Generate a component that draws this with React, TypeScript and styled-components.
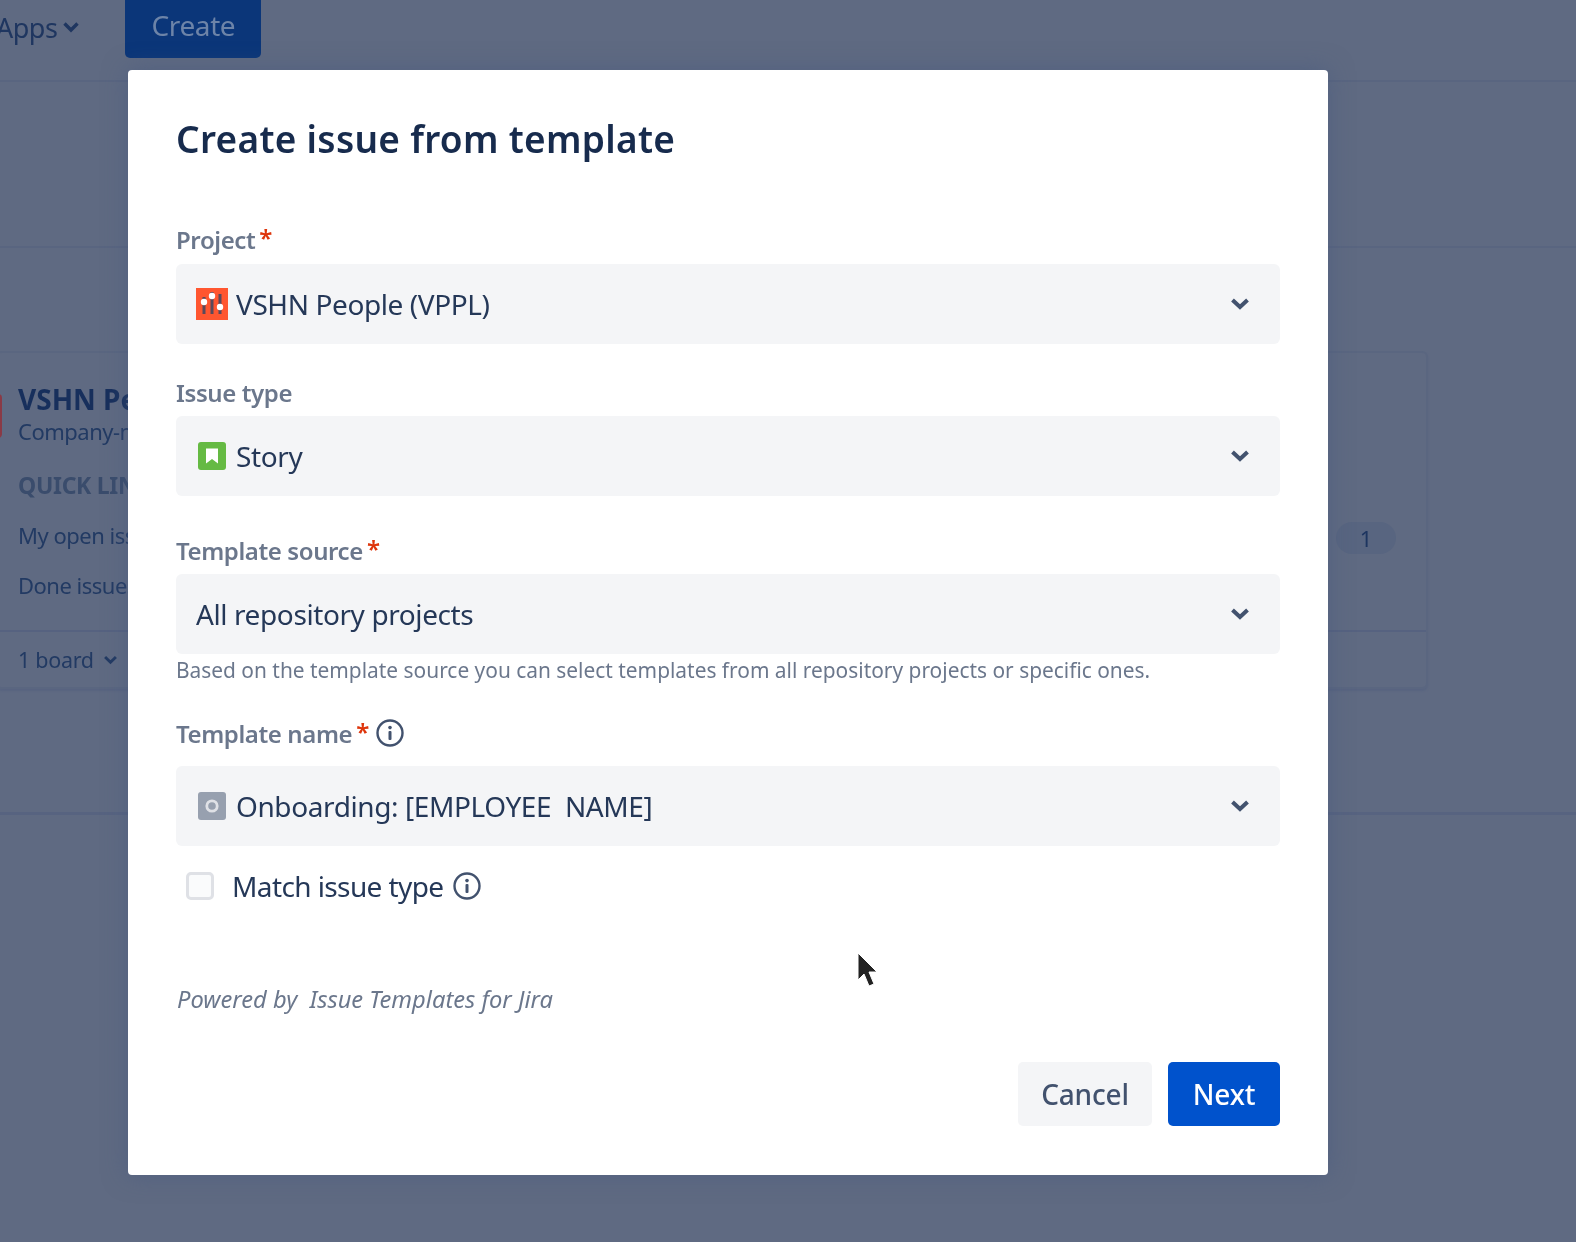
import React from "react";
import styled, { createGlobalStyle } from "styled-components";

const Global = createGlobalStyle`
  html, body { margin: 0; padding: 0; background: #5f6a82; }
  body { width: 1576px; height: 1242px; overflow: hidden; font-family: "Noto Sans", "Open Sans", sans-serif; }
  * { box-sizing: border-box; }
`;

const Page = styled.div`
  position: relative;
  width: 1576px;
  height: 1242px;
  overflow: hidden;
  background: #5f6a82;
  filter: blur(0.45px);
`;

/* dimmed page behind the dialog */
const Nav = styled.header`
  height: 82px;
  margin-left: -4px;
  display: flex;
  align-items: flex-start;
  gap: 45px;
  border-bottom: 2px solid #596580;
`;
const NavItem = styled.div`
  height: 54px;
  display: flex;
  align-items: center;
  gap: 5px;
  font-size: 27px;
  letter-spacing: -0.5px;
  color: #1f3660;
`;
const CreateButton = styled.div`
  width: 136px;
  height: 58px;
  padding-bottom: 8px;
  display: flex;
  align-items: center;
  justify-content: center;
  background: #0b3679;
  border-radius: 0 0 5px 5px;
  font-size: 28px;
  letter-spacing: -0.4px;
  color: #6d84a8;
`;
const PageHeader = styled.div`
  height: 166px;
  border-bottom: 2px solid #596580;
`;
const Content = styled.div`
  height: 567px;
  padding: 103px 148px 0 0;
  border-bottom: 3px solid #576380;
`;
const Card = styled.section`
  height: 338px;
  margin-left: -4px;
  border: 2px solid #5a6680;
  border-radius: 6px;
  box-shadow: 0 2px 2px #586480;
  display: flex;
  flex-direction: column;
`;
const CardBody = styled.div`
  position: relative;
  flex: 1;
  padding: 28px 0 0 20px;
  border-bottom: 2px solid #566280;
`;
const CardIcon = styled.div`
  position: absolute;
  left: -26px;
  top: 41px;
  width: 30px;
  height: 44px;
  background: #8a3a46;
  border-radius: 4px;
`;
const CardTitle = styled.div`
  font-size: 28px;
  font-weight: 700;
  line-height: 36px;
  color: #172f5c;
  white-space: nowrap;
`;
const CardSub = styled.div`
  font-size: 22px;
  line-height: 28px;
  letter-spacing: -0.5px;
  color: #223a63;
  white-space: nowrap;
`;
const CardHeading = styled.div`
  margin-top: 26px;
  font-size: 23px;
  font-weight: 700;
  line-height: 28px;
  letter-spacing: -0.3px;
  color: #3a4c6c;
  white-space: nowrap;
`;
const QuickLink = styled.div<{ $mt: number }>`
  margin-top: ${(p) => p.$mt}px;
  font-size: 22px;
  line-height: 28px;
  letter-spacing: -0.5px;
  color: #223a63;
  white-space: nowrap;
`;
const Badge = styled.div`
  position: absolute;
  right: 30px;
  top: 169px;
  width: 60px;
  height: 32px;
  border-radius: 16px;
  background: #586580;
  display: flex;
  align-items: center;
  justify-content: center;
  font-size: 22px;
  color: #1d3560;
`;
const CardFooter = styled.div`
  height: 55px;
  padding-left: 20px;
  display: flex;
  align-items: center;
  gap: 9px;
  font-size: 21.5px;
  letter-spacing: -0.3px;
  color: #223a63;
`;

/* dialog */
const Dialog = styled.div`
  position: absolute;
  left: 128px;
  top: 70px;
  width: 1200px;
  height: 1105px;
  padding: 49px 48px 49px;
  background: #fff;
  border-radius: 4px;
  box-shadow: 0 0 24px rgba(70, 88, 125, 0.55);
  display: flex;
  flex-direction: column;
`;
const Title = styled.h1`
  margin: 0;
  font-size: 37px;
  font-weight: 600;
  line-height: 40px;
  letter-spacing: 0.3px;
  color: #172b4d;
`;
const Label = styled.div<{ $mt: number; $mb?: number; $h?: number }>`
  margin-top: ${(p) => p.$mt}px;
  margin-bottom: ${(p) => p.$mb ?? 10}px;
  height: ${(p) => p.$h ?? 28}px;
  display: flex;
  align-items: center;
  font-size: 24px;
  font-weight: 600;
  letter-spacing: -0.4px;
  color: #6b778c;
`;
const Req = styled.span`
  color: #de350b;
  margin-left: 4px;
  position: relative;
  top: -2px;
`;
const Select = styled.div`
  height: 80px;
  flex: none;
  padding: 0 30px 0 20px;
  background: #f4f5f7;
  border-radius: 6px;
  display: flex;
  align-items: center;
  font-size: 28px;
  letter-spacing: -0.4px;
  color: #253858;
`;
const IconSlot = styled.span`
  width: 32px;
  height: 32px;
  margin-right: 8px;
  display: flex;
  align-items: center;
  justify-content: center;
  flex: none;
`;
const SelectText = styled.span`
  flex: 1;
  white-space: pre;
`;
const Hint = styled.div`
  margin-top: 4px;
  height: 24px;
  line-height: 24px;
  font-size: 20.9px;
  color: #6b778c;
  white-space: nowrap;
`;
const CheckRow = styled.div`
  margin-top: 26px;
  height: 28px;
  padding-left: 10px;
  display: flex;
  align-items: center;
  font-size: 28px;
  letter-spacing: -0.6px;
  color: #253858;
`;
const Box = styled.span`
  width: 28px;
  height: 28px;
  margin-right: 18px;
  background: #fafbfc;
  border: 3px solid #dfe1e6;
  border-radius: 5px;
  flex: none;
`;
const Powered = styled.div`
  margin-top: 83px;
  height: 32px;
  padding-left: 1px;
  line-height: 32px;
  font-size: 23.7px;
  font-style: italic;
  color: #6b778c;
  white-space: pre;
`;
const Footer = styled.div`
  margin-top: 47px;
  display: flex;
  justify-content: flex-end;
  gap: 16px;
`;
const Button = styled.button<{ $primary?: boolean }>`
  height: 64px;
  width: ${(p) => (p.$primary ? 112 : 134)}px;
  padding: 0;
  border: 0;
  border-radius: 5px;
  font: 500 28px "Noto Sans", sans-serif;
  letter-spacing: -0.2px;
  background: ${(p) => (p.$primary ? "#0052cc" : "#f4f5f7")};
  color: ${(p) => (p.$primary ? "#fff" : "#42526e")};
`;
const Cursor = styled.svg`
  position: absolute;
  left: 856px;
  top: 952px;
`;

const Chevron = () => (
  <svg width="20" height="16" viewBox="0 0 20 16" fill="none" aria-hidden="true">
    <path d="M2.5 4l7.5 7 7.5-7" stroke="#42526e" strokeWidth="4" />
  </svg>
);
const SmallChevron = ({ color, size = 18 }: { color: string; size?: number }) => (
  <svg width={size} height={(size * 14) / 18} viewBox="0 0 18 14" fill="none" aria-hidden="true">
    <path d="M2.5 3.5l6.5 6.5 6.5-6.5" stroke={color} strokeWidth="3.4" />
  </svg>
);
const Info = ({ ml }: { ml: number }) => (
  <svg width="28" height="28" viewBox="0 0 28 28" fill="none" style={{ marginLeft: ml }} aria-hidden="true">
    <circle cx="14" cy="14" r="12.5" stroke="#42526e" strokeWidth="2.4" />
    <circle cx="14" cy="8.6" r="1.8" fill="#42526e" />
    <rect x="12.5" y="12" width="3" height="9" rx="1" fill="#42526e" />
  </svg>
);
const ProjectIcon = () => (
  <svg width="32" height="32" viewBox="0 0 32 32" aria-hidden="true">
    <rect width="32" height="32" fill="#ff5630" />
    <rect x="6.5" y="9" width="3" height="17" fill="#5a4a5c" />
    <rect x="14.5" y="4" width="3" height="22" fill="#5a4a5c" />
    <rect x="22.5" y="6" width="3" height="20" fill="#5a4a5c" />
    <circle cx="8" cy="14" r="3.2" fill="#fff" />
    <circle cx="16" cy="8" r="3.2" fill="#fff" />
    <circle cx="24" cy="19" r="3.2" fill="#fff" />
  </svg>
);
const StoryIcon = () => (
  <svg width="28" height="28" viewBox="0 0 28 28" aria-hidden="true">
    <rect width="28" height="28" rx="3" fill="#65ba43" />
    <path d="M8 6.5h12v15l-6-4.6-6 4.6z" fill="#fff" />
  </svg>
);
const TemplateIcon = () => (
  <svg width="28" height="28" viewBox="0 0 28 28" aria-hidden="true">
    <rect width="28" height="28" rx="3" fill="#97a0af" />
    <circle cx="14" cy="14" r="5.2" fill="none" stroke="#dfe1e6" strokeWidth="2.8" />
  </svg>
);

export default function App() {
  return (
    <Page>
      <Global />
      <Nav>
        <NavItem>
          Apps <SmallChevron color="#1f3660" />
        </NavItem>
        <CreateButton>Create</CreateButton>
      </Nav>
      <PageHeader />
      <Content>
        <Card>
          <CardBody>
            <CardIcon />
            <CardTitle>VSHN People</CardTitle>
            <CardSub>Company-managed business</CardSub>
            <CardHeading>QUICK LINKS</CardHeading>
            <QuickLink $mt={22}>My open issues</QuickLink>
            <QuickLink $mt={22}>Done issues</QuickLink>
            <Badge>1</Badge>
          </CardBody>
          <CardFooter>
            1 board <SmallChevron color="#223a63" size={15} />
          </CardFooter>
        </Card>
      </Content>

      <Dialog>
        <Title>Create issue from template</Title>
        <Label $mt={66} $mb={11}>
          Project<Req>*</Req>
        </Label>
        <Select>
          <IconSlot>
            <ProjectIcon />
          </IconSlot>
          <SelectText>VSHN People (VPPL)</SelectText>
          <Chevron />
        </Select>
        <Label $mt={34}>Issue type</Label>
        <Select>
          <IconSlot>
            <StoryIcon />
          </IconSlot>
          <SelectText>Story</SelectText>
          <Chevron />
        </Select>
        <Label $mt={40}>
          Template source<Req>*</Req>
        </Label>
        <Select>
          <SelectText>All repository projects</SelectText>
          <Chevron />
        </Select>
        <Hint>Based on the template source you can select templates from all repository projects or specific ones.</Hint>
        <Label $mt={35} $mb={17} $h={32}>
          Template name<Req>*</Req>
          <Info ml={7} />
        </Label>
        <Select>
          <IconSlot>
            <TemplateIcon />
          </IconSlot>
          <SelectText>Onboarding: [EMPLOYEE  NAME]</SelectText>
          <Chevron />
        </Select>
        <CheckRow>
          <Box />
          Match issue type
          <Info ml={10} />
        </CheckRow>
        <Powered>Powered by  Issue Templates for Jira</Powered>
        <Footer>
          <Button>Cancel</Button>
          <Button $primary>Next</Button>
        </Footer>
      </Dialog>

      <Cursor width="26" height="40" viewBox="0 0 26 40" aria-hidden="true">
        <path d="M2 1v27l6-6 5 12 5-2-5-12h8z" fill="#222" stroke="#fff" strokeWidth="1" />
      </Cursor>
    </Page>
  );
}
